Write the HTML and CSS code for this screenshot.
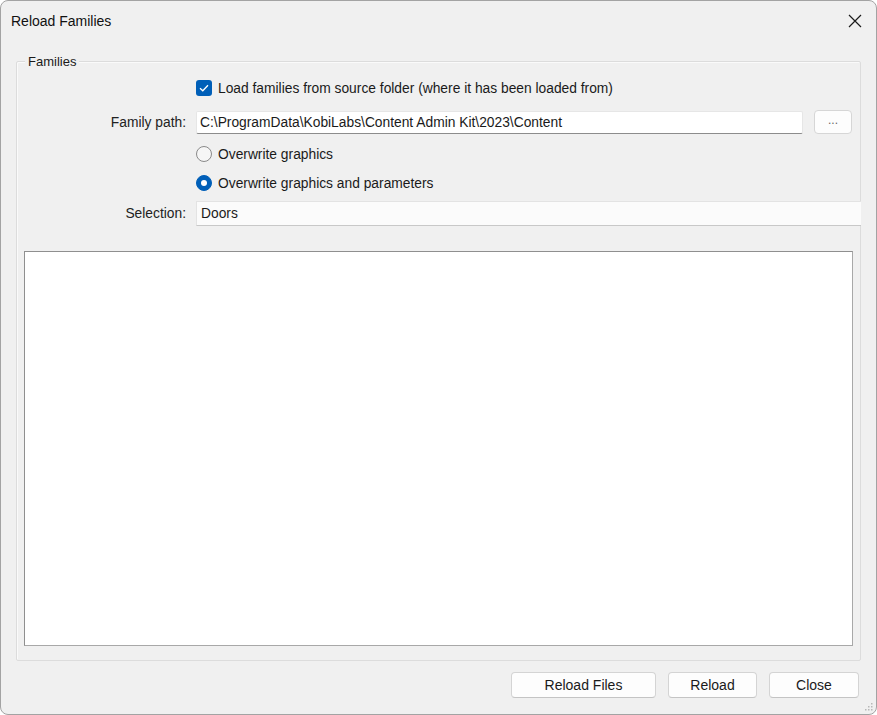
FILE: index.html
```html
<!DOCTYPE html>
<html lang="en">
<head>
    <meta charset="UTF-8">
    <title>Reload Families</title>
    <link rel="stylesheet" href="styles.css">
</head>
<body>
    <div class="window">
        <div class="titlebar">
            <span class="title">Reload Families</span>
            <svg class="close-x" width="14" height="14" viewBox="0 0 14 14">
                <path d="M1 1 L13 13 M13 1 L1 13" stroke="#1b1b1b" stroke-width="1.2" fill="none"/>
            </svg>
        </div>

        <div class="group">
            <span class="group-title">Families</span>

            <div class="row indent check-row">
                <span class="checkbox">
                    <svg width="10" height="8" viewBox="0 0 10 8">
                        <path d="M1 4.2 L3.8 6.8 L9 1.2" stroke="#fff" stroke-width="1.3" fill="none"/>
                    </svg>
                </span>
                <span class="opt-text">Load families from source folder (where it has been loaded from)</span>
            </div>

            <div class="row path-row">
                <label class="lbl">Family path:</label>
                <div class="textbox">C:\ProgramData\KobiLabs\Content Admin Kit\2023\Content</div>
                <button class="browse">...</button>
            </div>

            <div class="row indent radio-row">
                <span class="radio"></span>
                <span class="opt-text">Overwrite graphics</span>
            </div>

            <div class="row indent radio-row second">
                <span class="radio on"></span>
                <span class="opt-text">Overwrite graphics and parameters</span>
            </div>

            <div class="row sel-row">
                <label class="lbl">Selection:</label>
                <div class="selbox">Doors</div>
            </div>

            <div class="listbox"></div>
        </div>

        <div class="footer">
            <button class="btn wide">Reload Files</button>
            <button class="btn">Reload</button>
            <button class="btn close">Close</button>
        </div>

        <!-- resize grip -->
        <svg class="grip" width="8" height="8" viewBox="0 0 8 8">
            <rect x="6" y="0" width="1.5" height="1.5" fill="#b8b8b8"/>
            <rect x="3" y="3" width="1.5" height="1.5" fill="#b8b8b8"/>
            <rect x="6" y="3" width="1.5" height="1.5" fill="#b8b8b8"/>
            <rect x="0" y="6" width="1.5" height="1.5" fill="#b8b8b8"/>
            <rect x="3" y="6" width="1.5" height="1.5" fill="#b8b8b8"/>
            <rect x="6" y="6" width="1.5" height="1.5" fill="#b8b8b8"/>
        </svg>
    </div>
</body>
</html>
```

FILE: styles.css
```css
html, body {
    margin: 0;
    padding: 0;
    background: #ffffff;
}

body {
    font-family: "Liberation Sans", Arial, sans-serif;
    font-size: 13.8px;
    color: #1a1a1a;
}

.window {
    position: relative;
    width: 877px;
    height: 715px;
    box-sizing: border-box;
    border: 1px solid #a3a3a3;
    border-radius: 8px;
    background: #f0f0f0;
    overflow: hidden;
}

.titlebar {
    height: 39px;
    display: flex;
    align-items: center;
    justify-content: space-between;
    padding: 0 14px 0 10px;
}

.title {
    font-size: 14px;
    color: #111;
}

/* group box */
.group {
    position: relative;
    margin: 21px 0 0 15px;
    width: 845px;
    height: 600px;
    box-sizing: border-box;
    border: 1px solid #dcdcdc;
    box-shadow: inset 1px 1px 0 #fafafa;
    border-radius: 2px;
    padding-top: 17px;
}

.group-title {
    position: absolute;
    top: -8px;
    left: 8px;
    padding: 0 3px;
    background: #f0f0f0;
    font-size: 13px;
    line-height: 16px;
}

.row {
    display: flex;
    align-items: center;
}

.indent {
    padding-left: 179px;
}

.lbl {
    width: 169px;
    margin-right: 10px;
    text-align: right;
    color: #222;
}

.check-row {
    height: 18px;
}

.path-row {
    margin-top: 13px;
    height: 24px;
    margin-right: 8px;
}

.radio-row {
    margin-top: 11px;
    height: 18px;
}

.sel-row {
    margin-top: 9px;
    height: 25px;
    margin-right: -1px;
}

.opt-text {
    margin-left: 6px;
}

.checkbox {
    width: 16px;
    height: 16px;
    border-radius: 3px;
    background: #005fb8;
    display: flex;
    align-items: center;
    justify-content: center;
}

.radio {
    width: 14px;
    height: 14px;
    border-radius: 50%;
    border: 1px solid #8a8a8a;
    background: #f6f6f6;
    position: relative;
}

.radio.on {
    border-color: #005fb8;
    background: #005fb8;
}

.radio.on::after {
    content: "";
    position: absolute;
    left: 4px;
    top: 4px;
    width: 6px;
    height: 6px;
    border-radius: 50%;
    background: #fff;
}

.textbox {
    flex: 1;
    height: 23px;
    box-sizing: border-box;
    margin-top: 1px;
    background: #fff;
    border: 1px solid #e6e6e6;
    border-bottom-color: #8c8c8c;
    border-radius: 2px;
    padding: 0 3px;
    line-height: 21px;
    white-space: nowrap;
    overflow: hidden;
}

.browse {
    width: 38px;
    height: 24px;
    margin-left: 11px;
    background: #fdfdfd;
    border: 1px solid #d6d6d6;
    border-radius: 4px;
    font-family: inherit;
    font-size: 12px;
    color: #666;
    padding: 0 0 4px;
}

.selbox {
    flex: 1;
    height: 25px;
    box-sizing: border-box;
    background: #fbfbfb;
    border-top: 1px solid #e3e3e3;
    border-bottom: 1px solid #c8c8c8;
    border-left: 1px solid #e3e3e3;
    padding: 0 4px;
    line-height: 23px;
}

.listbox {
    margin: 25px 7px 0 7px;
    height: 395px;
    box-sizing: border-box;
    background: #fff;
    border: 1px solid #8f8f8f;
    border-right-color: #a8a8a8;
    border-bottom-color: #a8a8a8;
}

/* buttons */
.footer {
    display: flex;
    justify-content: flex-end;
    gap: 12px;
    margin-top: 11px;
    padding-right: 17px;
}

.btn {
    width: 89px;
    height: 26px;
    background: #fdfdfd;
    border: 1px solid #d4d4d4;
    border-bottom-color: #c4c4c4;
    border-radius: 4px;
    font-family: inherit;
    font-size: 14px;
    color: #1a1a1a;
    padding: 0;
}

.btn.wide {
    width: 145px;
}

.btn.close {
    width: 90px;
}

.grip {
    position: absolute;
    right: 3px;
    bottom: 3px;
}
```
